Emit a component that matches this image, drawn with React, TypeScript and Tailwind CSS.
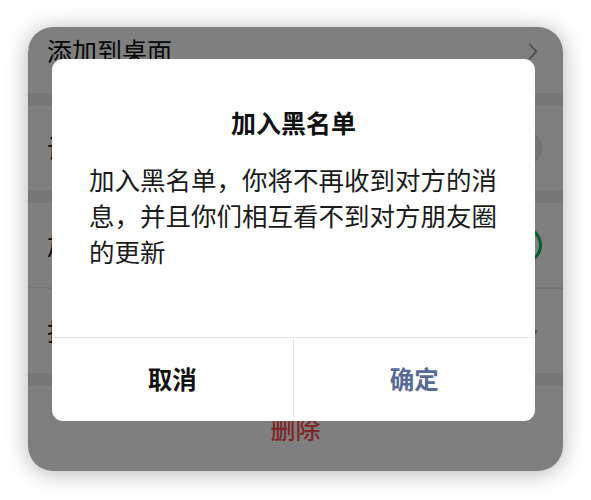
import React from "react";

const FONT = { fontFamily: '"Noto Sans CJK SC", "Noto Sans", sans-serif' };

function Chevron({ className = "" }: { className?: string }) {
  return (
    <svg viewBox="0 0 10 18" className={className} fill="none" stroke="currentColor" strokeWidth="2">
      <path d="M1.5 1.5 L8.5 9 L1.5 16.5" strokeLinecap="round" strokeLinejoin="round" />
    </svg>
  );
}

function Toggle({ on }: { on: boolean }) {
  return (
    <div
      className={
        on
          ? "flex h-[38px] w-[62px] items-center justify-end rounded-full bg-[#07c160] p-[3px]"
          : "flex h-[38px] w-[62px] items-center justify-start rounded-full border border-[#dcdcdc] bg-[#e6e6e6] p-[2px]"
      }
    >
      <div className="h-[32px] w-[32px] rounded-full bg-white shadow-[0_1px_3px_rgba(0,0,0,0.25)]" />
    </div>
  );
}

function Row({ label, children }: { label: string; children?: React.ReactNode }) {
  return (
    <div className="flex h-[84px] items-center justify-between bg-white pl-[19px] pr-[21px]">
      <span className="text-[25px] text-[#111]">{label}</span>
      {children}
    </div>
  );
}

function Band() {
  return <div className="h-[13px] bg-[#ededed]" />;
}

export default function App() {
  return (
    <div className="min-h-screen bg-white px-[28px] pt-[27px]" style={FONT}>
      <div className="relative h-[444px] overflow-hidden rounded-[25px] bg-[#ededed] shadow-[0_2px_22px_rgba(0,0,0,0.3)]">
        {/* settings list, scrolled a little */}
        <div className="-mt-[18px] flex flex-col">
          <Row label="添加到桌面">
            <Chevron className="mr-[4px] h-[17px] w-[10px] text-[#a0a0a0]" />
          </Row>
          <Band />
          <Row label="设为星标朋友">
            <Toggle on={false} />
          </Row>
          <Band />
          <div className="h-[85px]">
            <Row label="加入黑名单">
              <Toggle on />
            </Row>
          </div>
          <div className="bg-white pl-[19px]">
            <div className="h-px bg-[#e5e5e5]" />
          </div>
          <Row label="投诉">
            <Chevron className="mr-[4px] h-[17px] w-[10px] text-[#a0a0a0]" />
          </Row>
          <Band />
          <div className="flex h-[86px] items-center justify-center bg-white">
            <span className="text-[25px] font-medium text-[#fa5151]">删除</span>
          </div>
        </div>

        {/* dim layer */}
        <div className="absolute inset-0 bg-black/50" />

        {/* confirm dialog */}
        <div className="absolute left-[24px] top-[32px] flex h-[362px] w-[483px] flex-col overflow-hidden rounded-[11px] bg-white">
          <div className="h-[278px] px-[37px] pt-[45px]">
            <h2 className="text-center text-[25px] font-bold leading-[36px] text-[#111]">加入黑名单</h2>
            <p className="mt-[21px] text-[25.5px] leading-[36px] text-[#1a1a1a]">
              加入黑名单，你将不再收到对方的消息，并且你们相互看不到对方朋友圈的更新
            </p>
          </div>
          <div className="grid flex-1 grid-cols-2 border-t border-[#e8e8e8]">
            <button type="button" className="border-r border-[#e8e8e8] text-[24.5px] font-bold text-[#111]">
              取消
            </button>
            <button type="button" className="text-[24.5px] font-bold text-[#576b95]">
              确定
            </button>
          </div>
        </div>
      </div>
    </div>
  );
}
